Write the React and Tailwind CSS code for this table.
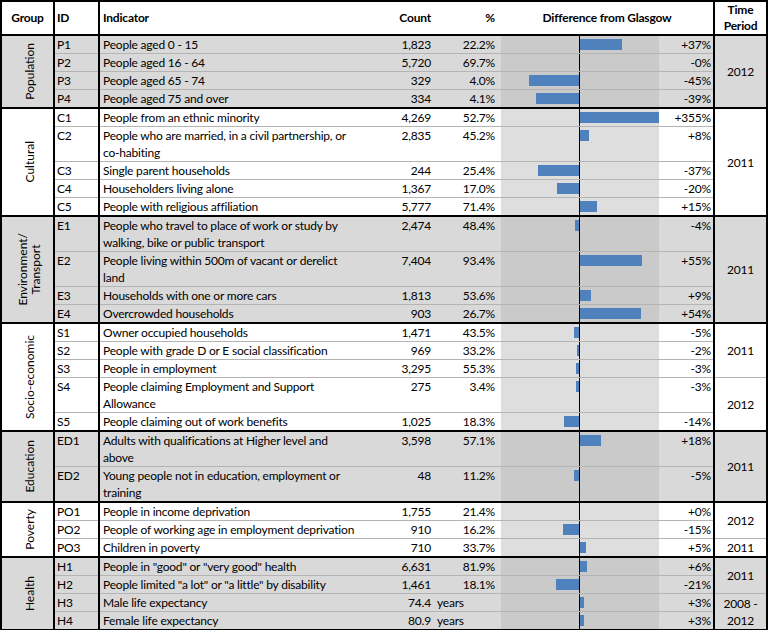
const groups = [
  {
    name: ['Population'], gray: true,
    periods: [{ label: ['2012'], rows: 4 }],
    rows: [
      { id: 'P1', text: ['People aged 0 - 15'], count: '1,823', pct: '22.2%', diff: 37, label: '+37%' },
      { id: 'P2', text: ['People aged 16 - 64'], count: '5,720', pct: '69.7%', diff: 0, label: '-0%' },
      { id: 'P3', text: ['People aged 65 - 74'], count: '329', pct: '4.0%', diff: -45, label: '-45%' },
      { id: 'P4', text: ['People aged 75 and over'], count: '334', pct: '4.1%', diff: -39, label: '-39%' },
    ],
  },
  {
    name: ['Cultural'], gray: false,
    periods: [{ label: ['2011'], rows: 5 }],
    rows: [
      { id: 'C1', text: ['People from an ethnic minority'], count: '4,269', pct: '52.7%', diff: 355, label: '+355%' },
      { id: 'C2', text: ['People who are married, in a civil partnership, or', 'co-habiting'], count: '2,835', pct: '45.2%', diff: 8, label: '+8%' },
      { id: 'C3', text: ['Single parent households'], count: '244', pct: '25.4%', diff: -37, label: '-37%' },
      { id: 'C4', text: ['Householders living alone'], count: '1,367', pct: '17.0%', diff: -20, label: '-20%' },
      { id: 'C5', text: ['People with religious affiliation'], count: '5,777', pct: '71.4%', diff: 15, label: '+15%' },
    ],
  },
  {
    name: ['Environment/', 'Transport'], gray: true,
    periods: [{ label: ['2011'], rows: 4 }],
    rows: [
      { id: 'E1', text: ['People who travel to place of work or study by', 'walking, bike or public transport'], count: '2,474', pct: '48.4%', diff: -4, label: '-4%' },
      { id: 'E2', text: ['People living within 500m of vacant or derelict', 'land'], count: '7,404', pct: '93.4%', diff: 55, label: '+55%' },
      { id: 'E3', text: ['Households with one or more cars'], count: '1,813', pct: '53.6%', diff: 9, label: '+9%' },
      { id: 'E4', text: ['Overcrowded households'], count: '903', pct: '26.7%', diff: 54, label: '+54%' },
    ],
  },
  {
    name: ['Socio-economic'], gray: false,
    periods: [{ label: ['2011'], rows: 3 }, { label: ['2012'], rows: 2 }],
    rows: [
      { id: 'S1', text: ['Owner occupied households'], count: '1,471', pct: '43.5%', diff: -5, label: '-5%' },
      { id: 'S2', text: ['People with grade D or E social classification'], count: '969', pct: '33.2%', diff: -2, label: '-2%' },
      { id: 'S3', text: ['People in employment'], count: '3,295', pct: '55.3%', diff: -3, label: '-3%' },
      { id: 'S4', text: ['People claiming Employment and Support', 'Allowance'], count: '275', pct: '3.4%', diff: -3, label: '-3%' },
      { id: 'S5', text: ['People claiming out of work benefits'], count: '1,025', pct: '18.3%', diff: -14, label: '-14%' },
    ],
  },
  {
    name: ['Education'], gray: true,
    periods: [{ label: ['2011'], rows: 2 }],
    rows: [
      { id: 'ED1', text: ['Adults with qualifications at Higher level and', 'above'], count: '3,598', pct: '57.1%', diff: 18, label: '+18%' },
      { id: 'ED2', text: ['Young people not in education, employment or', 'training'], count: '48', pct: '11.2%', diff: -5, label: '-5%' },
    ],
  },
  {
    name: ['Poverty'], gray: false,
    periods: [{ label: ['2012'], rows: 2 }, { label: ['2011'], rows: 1 }],
    rows: [
      { id: 'PO1', text: ['People in income deprivation'], count: '1,755', pct: '21.4%', diff: 0, label: '+0%' },
      { id: 'PO2', text: ['People of working age in employment deprivation'], count: '910', pct: '16.2%', diff: -15, label: '-15%' },
      { id: 'PO3', text: ['Children in poverty'], count: '710', pct: '33.7%', diff: 5, label: '+5%' },
    ],
  },
  {
    name: ['Health'], gray: true,
    periods: [{ label: ['2011'], rows: 2 }, { label: ['2008 -', '2012'], rows: 2 }],
    rows: [
      { id: 'H1', text: ['People in "good" or "very good" health'], count: '6,631', pct: '81.9%', diff: 6, label: '+6%' },
      { id: 'H2', text: ['People limited "a lot" or "a little" by disability'], count: '1,461', pct: '18.1%', diff: -21, label: '-21%' },
      { id: 'H3', text: ['Male life expectancy'], count: '74.4', years: true, diff: 3, label: '+3%' },
      { id: 'H4', text: ['Female life expectancy'], count: '80.9', years: true, diff: 3, label: '+3%' },
    ],
  },
]

function Row({ g, r, i }) {
  const last = i === g.rows.length - 1
  const band = g.gray ? 'bg-[#cacaca]' : 'bg-[#dedede]'
  const bottom = last ? 'border-b-2 border-b-black' : 'border-b border-b-[#b4b4b4]'
  const w = Math.min(Math.abs(r.diff) * 1.12, 79)

  let acc = 0
  let period = null
  for (const p of g.periods) {
    if (acc === i) {
      const end = acc + p.rows === g.rows.length
      period = (
        <td rowSpan={p.rows} className={`border-l-2 border-l-black text-center align-middle leading-[17px] ${end ? 'border-b-2 border-b-black' : 'border-b border-b-[#b4b4b4]'}`}>
          {p.label.map(l => <div key={l}>{l}</div>)}
        </td>
      )
    }
    acc += p.rows
  }

  return (
    <tr className={`${r.text.length > 1 ? 'h-[35px]' : 'h-[17px]'} ${g.gray ? 'bg-[#d9d9d9]' : 'bg-white'}`}>
      {i === 0 && (
        <td rowSpan={g.rows.length} className="border-b-2 border-b-black border-r-2 border-r-black align-middle">
          <div className="flex justify-center pl-[3px]">
            <span className="[writing-mode:vertical-rl] rotate-180 text-center leading-[13px] tracking-normal">
              {g.name.map(n => <span key={n} className="block">{n}</span>)}
            </span>
          </div>
        </td>
      )}
      <td className={`${bottom} border-r-2 border-r-black align-top pl-[2px] leading-[17px]`}>{r.id}</td>
      <td className={`${bottom} align-top pl-[3px] leading-[17px] whitespace-nowrap`}>
        {r.text.map(t => <div key={t}>{t}</div>)}
      </td>
      <td className={`${bottom} align-top text-right pr-[5px] leading-[17px]`}>{r.count}</td>
      <td className={`${bottom} align-top leading-[17px] ${r.years ? 'text-left pl-[1px]' : 'text-right pr-[6px]'}`}>{r.years ? 'years' : r.pct}</td>
      <td className={`${bottom} ${band} border-r border-r-black align-top`}>
        <div className="flex justify-end pt-[3px]">
          {r.diff < 0 && <div className="h-[11px] bg-[#4f81bd]" style={{ width: w }} />}
        </div>
      </td>
      <td className={`${bottom} ${band} align-top`}>
        <div className="flex justify-start pt-[3px]">
          {r.diff > 0 && <div className="h-[11px] bg-[#4f81bd]" style={{ width: w }} />}
        </div>
      </td>
      <td className={`${bottom} align-top text-right pr-[2px] leading-[17px]`}>{r.label}</td>
      {period}
    </tr>
  )
}

export default function App() {
  return (
    <div className="w-[768px] h-[630px] bg-white text-black font-['Lato',sans-serif] text-[12px] tracking-[-0.2px]">
      <table className="w-[768px] table-fixed border-collapse border-2 border-black">
        <colgroup>
          <col className="w-[53px]" />
          <col className="w-[45px]" />
          <col />
          <col className="w-[55px]" />
          <col className="w-[65px]" />
          <col className="w-[79px]" />
          <col className="w-[79px]" />
          <col className="w-[55px]" />
          <col className="w-[53px]" />
        </colgroup>
        <thead>
          <tr className="h-[32px] font-bold">
            <th className="border-b-2 border-b-black border-r-2 border-r-black text-center align-middle">Group</th>
            <th className="border-b-2 border-b-black border-r-2 border-r-black text-left pl-[2px] align-middle">ID</th>
            <th className="border-b-2 border-b-black text-left pl-[3px] align-middle">Indicator</th>
            <th className="border-b-2 border-b-black text-right pr-[5px] align-middle">Count</th>
            <th className="border-b-2 border-b-black text-right pr-[6px] align-middle">%</th>
            <th colSpan={3} className="border-b-2 border-b-black border-r-2 border-r-black text-center align-middle">Difference from Glasgow</th>
            <th className="border-b-2 border-b-black text-center align-middle leading-[16px]">
              <div>Time</div>
              <div>Period</div>
            </th>
          </tr>
        </thead>
        <tbody>
          {groups.flatMap(g => g.rows.map((r, i) => <Row key={r.id} g={g} r={r} i={i} />))}
        </tbody>
      </table>
    </div>
  )
}
